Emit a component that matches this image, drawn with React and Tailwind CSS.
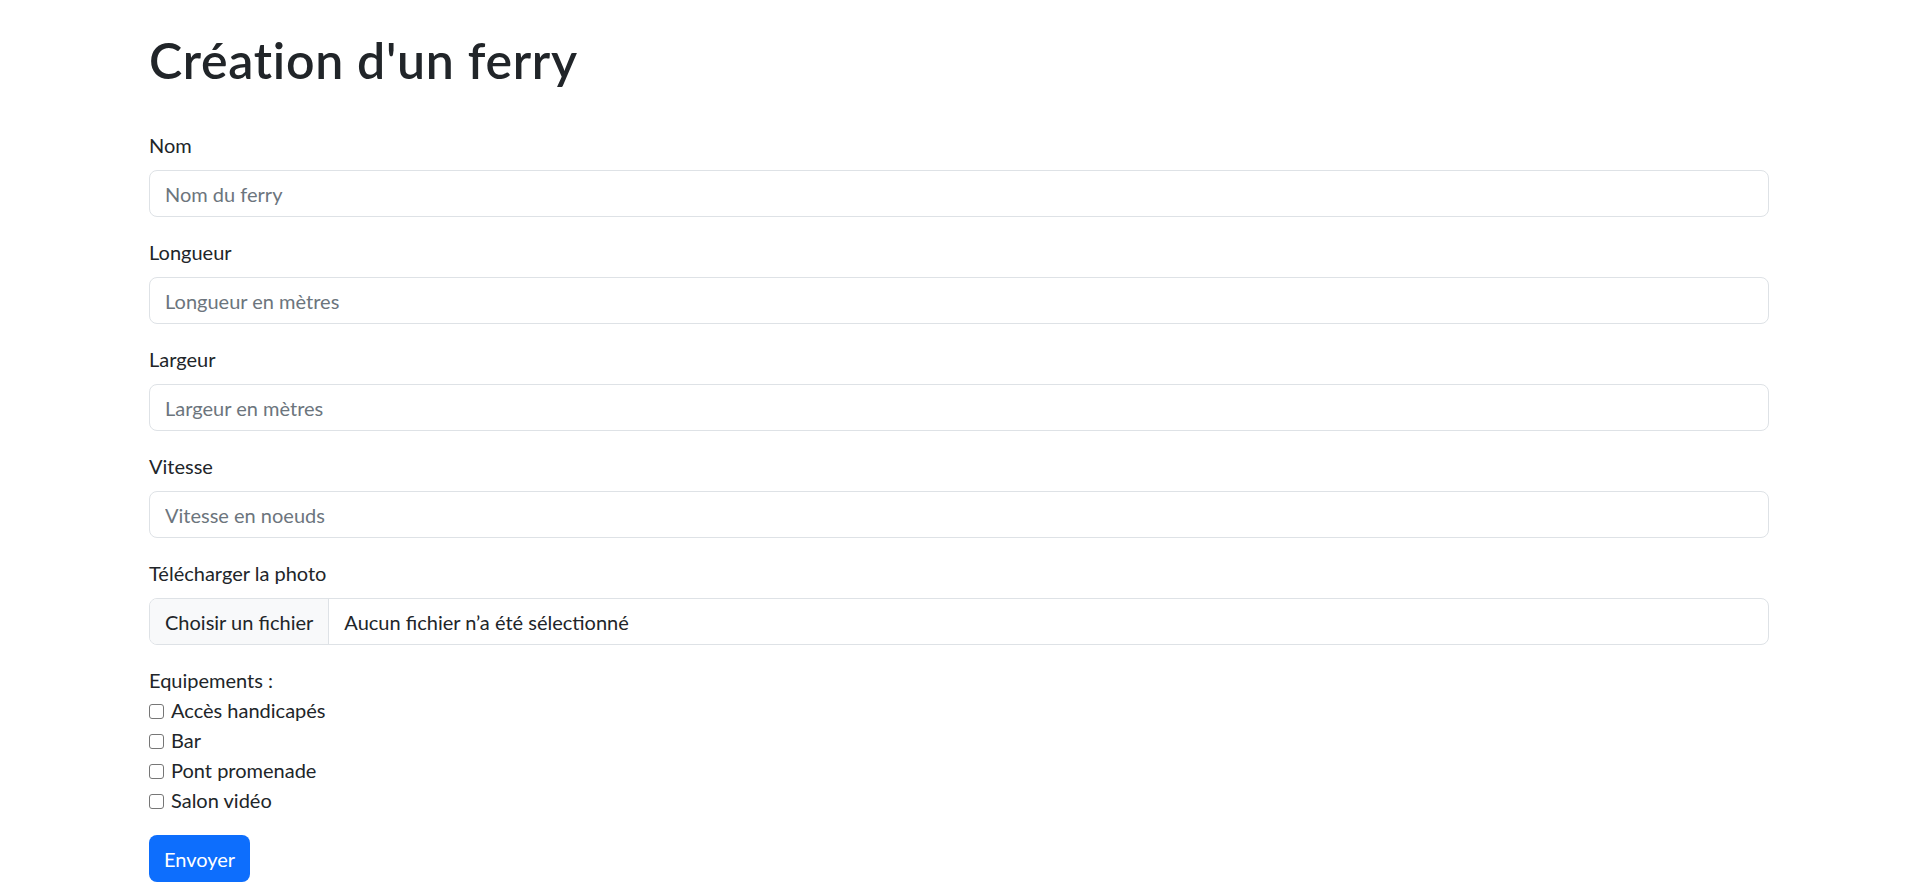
import React from "react";

const fields = [
  { label: "Nom", placeholder: "Nom du ferry" },
  { label: "Longueur", placeholder: "Longueur en mètres" },
  { label: "Largeur", placeholder: "Largeur en mètres" },
  { label: "Vitesse", placeholder: "Vitesse en noeuds" },
];

const equipements = ["Accès handicapés", "Bar", "Pont promenade", "Salon vidéo"];

export default function App() {
  return (
    <div className="min-h-screen bg-white text-[#212529] font-['Lato',sans-serif] text-[20px] leading-[30px]">
      <div className="mx-auto w-[1620px] pt-[30px]">
        <h1 className="text-[50px] leading-[60px] font-semibold tracking-[0.7px] mb-[40px]">
          Création d'un ferry
        </h1>

        <form autoComplete="off">
          {/* champs texte */}
          {fields.map((f) => (
            <div key={f.label} className="mb-[20px]">
              <label className="block mb-[10px]">{f.label}</label>
              <input
                type="text"
                placeholder={f.placeholder}
                className="block w-full h-[47px] px-[15px] border border-[#dee2e6] rounded-[8px] placeholder:text-[#6c757d] focus:outline-none"
              />
            </div>
          ))}

          {/* photo */}
          <div className="mb-[20px]">
            <label className="block mb-[10px]">Télécharger la photo</label>
            <div className="flex items-stretch w-full h-[47px] border border-[#dee2e6] rounded-[8px] overflow-hidden">
              <span className="flex items-center px-[15px] bg-[#f8f9fa] border-r border-[#dee2e6]">
                Choisir un fichier
              </span>
              <span className="flex items-center pl-[15px]">
                Aucun fichier n’a été sélectionné
              </span>
            </div>
          </div>

          {/* equipements */}
          <div>
            <div>Equipements :</div>
            {equipements.map((e) => (
              <label key={e} className="flex items-center h-[30px]">
                <input
                  type="checkbox"
                  className="appearance-none shrink-0 w-[15px] h-[15px] m-0 mt-[3px] mr-[7px] bg-white border border-[#767676] rounded-[3px]"
                />
                {e}
              </label>
            ))}
          </div>

          <button
            type="button"
            className="mt-[20px] h-[47px] px-[15px] bg-[#0d6efd] text-white rounded-[8px]"
          >
            Envoyer
          </button>
        </form>
      </div>
    </div>
  );
}
